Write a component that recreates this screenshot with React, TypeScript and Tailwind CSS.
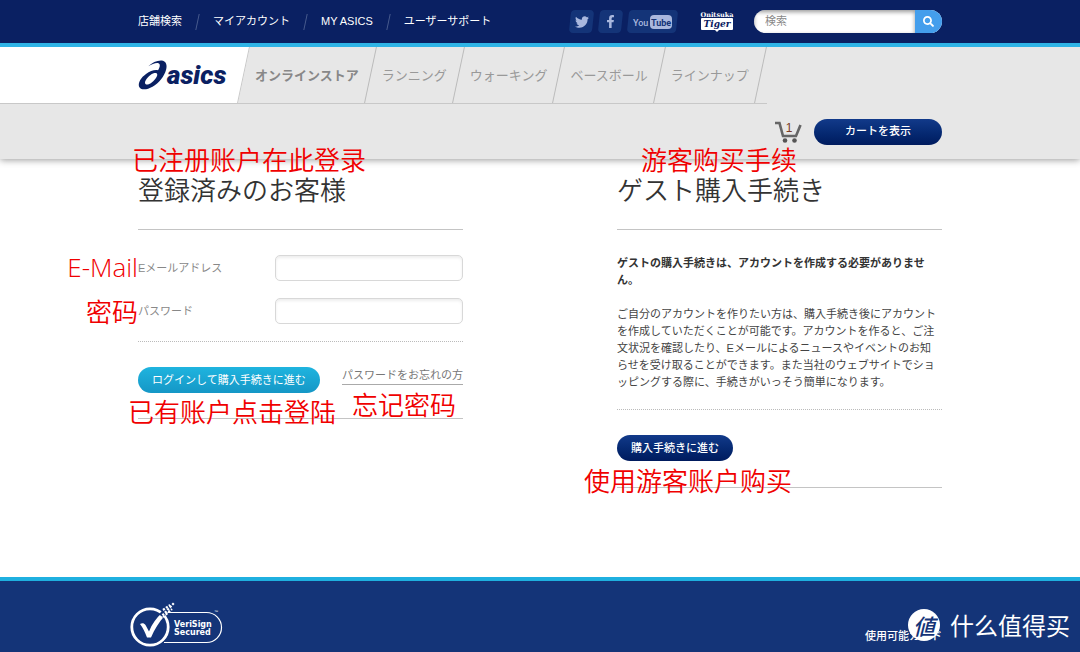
import React from "react";
import { FaFacebookF, FaTwitter, FaSearch } from "react-icons/fa";

const NAV_LINKS = ["店舗検索", "マイアカウント", "MY ASICS", "ユーザーサポート"];

const TABS = [
  { label: "オンラインストア", active: true },
  { label: "ランニング", active: false },
  { label: "ウォーキング", active: false },
  { label: "ベースボール", active: false },
  { label: "ラインナップ", active: false },
];

function AsicsLogo() {
  return (
    <svg width="96" height="32" viewBox="0 0 96 32" role="img" aria-label="asics">
      {/* Spiral mark */}
      <path
        fill="#0a2062"
        fillRule="evenodd"
        d="M10.300 7.200C14 3.500 19 1.200 23.500 1.400C28 1.800 29.600 5.800 28 11C26.500 17 21 24 14.500 27.800C8.500 31.200 2.500 31.300 1 27.500C0 23.500 3 18.500 8 15C12 12 16.500 10.600 20 11.300C22 8.500 22.600 5.200 20.500 4.300C18 3.500 14 5.200 10.300 7.200ZM7.500 25C5.800 23 9 18.500 12.500 16C15.500 13.800 18.800 13.400 19.200 15.200C19.800 17.600 16 22 12.800 24.200C10.500 25.700 8.300 26 7.500 25Z"
      />
      <text x="29" y="25" fill="#0a2062" fontFamily="Roboto, 'Liberation Sans', sans-serif" fontSize="26" fontWeight="900" fontStyle="italic">
        asics
      </text>
    </svg>
  );
}

function TigerLogo() {
  return (
    <svg width="34" height="23" viewBox="0 0 34 23" role="img" aria-label="Onitsuka Tiger">
      <text x="17" y="7" textAnchor="middle" fill="#fff" fontFamily="'DejaVu Serif', serif" fontWeight="700" fontSize="6.500">
        Onitsuka
      </text>
      <path fill="#fff" d="M2 8H32Q33 8 33 9V19Q33 20 32 20H19L17 22L15 20H2Q1 20 1 19V9Q1 8 2 8Z" />
      <text x="17" y="17" textAnchor="middle" fill="#0a2062" fontFamily="'DejaVu Serif', serif" fontStyle="italic" fontWeight="700" fontSize="9">
        Tiger
      </text>
    </svg>
  );
}

function YouTubeLogo() {
  return (
    <svg width="42" height="16" viewBox="0 0 42 16" aria-hidden="true">
      <text x="1" y="12" fill="#a9b8de" fontFamily="Roboto, 'Liberation Sans', sans-serif" fontWeight="500" fontSize="9">
        You
      </text>
      <rect x="18" y="1" width="22" height="14" rx="4" fill="#a9b8de" />
      <text x="29" y="12" textAnchor="middle" fill="#143478" fontFamily="Roboto, 'Liberation Sans', sans-serif" fontWeight="700" fontSize="9">
        Tube
      </text>
    </svg>
  );
}

function CartIcon() {
  return (
    <svg width="28" height="23" viewBox="0 0 28 23" aria-hidden="true">
      <path d="M1 3H5.500L9 16H22L26.500 5" fill="none" stroke="#666" strokeWidth="2.600" />
      <circle cx="11" cy="20.500" r="2.300" fill="#555" />
      <circle cx="20.500" cy="20.500" r="2.300" fill="#555" />
      <text x="15" y="12" textAnchor="middle" fill="#7a3b22" fontFamily="'Liberation Sans', sans-serif" fontSize="12">
        1
      </text>
    </svg>
  );
}

function VeriSignBadge() {
  return (
    <svg width="94" height="46" viewBox="0 0 94 46" role="img" aria-label="VeriSign Secured">
      <path d="M34 11.500H76.500A15 15 0 0 1 76.500 41.500H34" fill="none" stroke="#fff" strokeWidth="1.200" />
      <circle cx="20" cy="26" r="18.200" fill="#143478" stroke="#fff" strokeWidth="2.800" />
      <path d="M10 23C12 22 14 22 15.500 24L19 30.500C22 23 26.500 16.500 32 12L34.500 15C29 21 24.500 28.500 21 36.500H17C15 31 13 27 10 23Z" fill="#fff" />
      <path d="M31 15L37 8" stroke="#143478" strokeWidth="5" />
      <path d="M30 17L44 2M33 16L42 8M33 9L40 4" stroke="#fff" strokeWidth="2.200" strokeDasharray="2.200 1.400" />
      <text x="44" y="26" fill="#fff" fontFamily="'DejaVu Sans', sans-serif" fontWeight="700" fontSize="8">
        VeriSign
      </text>
      <text x="44" y="34" fill="#fff" fontFamily="'DejaVu Sans', sans-serif" fontWeight="700" fontSize="8">
        Secured
      </text>
      <text x="84" y="12" fill="#fff" fontFamily="'Liberation Sans', sans-serif" fontSize="4">
        ™
      </text>
    </svg>
  );
}

function SocialLink({ label, wide, children }: { label: string; wide?: boolean; children: React.ReactNode }) {
  return (
    <a href="#" aria-label={label} className={`relative flex h-[23px] items-center justify-center text-[#a9b8de] ${wide ? "w-[51px]" : "w-[25px]"}`}>
      <span className="absolute inset-x-px inset-y-0 -skew-x-6 rounded-sm bg-[#143478]" />
      <span className="relative">{children}</span>
    </a>
  );
}

function Note({ className, children }: { className: string; children: React.ReactNode }) {
  return (
    <span
      lang="zh-CN"
      className={`pointer-events-none absolute whitespace-nowrap font-['Open_Sans','Noto_Sans_CJK_SC',sans-serif] text-[26px] leading-[26px] font-[350] text-[#f00000] ${className}`}
    >
      {children}
    </span>
  );
}

function Field({ id, label, type }: { id: string; label: string; type: string }) {
  return (
    <div className="flex items-center justify-between">
      <label htmlFor={id} className="text-[#888]">
        {label}
      </label>
      <input id={id} type={type} className="h-[26px] w-[188px] rounded-[5px] border border-[#d8d8d8] bg-white px-2 shadow-[inset_0_2px_3px_#eee] outline-none" />
    </div>
  );
}

export default function App() {
  return (
    <div lang="ja" className="flex min-h-screen flex-col overflow-x-hidden bg-white font-['Liberation_Sans','Noto_Sans_CJK_JP',sans-serif] text-[11px] leading-[17px]">
      <header className="bg-[#e7e7e7] shadow-[0_1px_7px_#999]">
        {/* Top bar */}
        <div className="border-b-4 border-[#2fb4e6] bg-[#0a2062]">
          <div className="mx-auto flex h-[43px] max-w-[804px] items-center justify-between">
            <nav className="flex items-center">
              {NAV_LINKS.map((label, i) => (
                <React.Fragment key={label}>
                  {i > 0 && <span className="mx-[15px] h-4 w-px -skew-x-12 bg-[#47598d]" />}
                  <a href="#" className="whitespace-nowrap text-white">
                    {label}
                  </a>
                </React.Fragment>
              ))}
            </nav>
            <div className="flex items-center">
              <div className="flex gap-1">
                <SocialLink label="Twitter">
                  <FaTwitter size={14} />
                </SocialLink>
                <SocialLink label="Facebook">
                  <FaFacebookF size={13} />
                </SocialLink>
                <SocialLink label="YouTube" wide>
                  <YouTubeLogo />
                </SocialLink>
              </div>
              <a href="#" className="mr-5 ml-[22px]">
                <TigerLogo />
              </a>
              <form className="flex h-[23px] w-[188px] overflow-hidden rounded-full bg-white">
                <input
                  type="search"
                  aria-label="検索"
                  placeholder="検索"
                  className="min-w-0 flex-1 pl-[11px] shadow-[inset_0_2px_4px_#999] outline-none placeholder:text-[#888]"
                />
                <button type="button" aria-label="検索する" className="flex w-[27px] items-center justify-center bg-[#449eec] text-white">
                  <FaSearch size={11} />
                </button>
              </form>
            </div>
          </div>
        </div>

        {/* Logo and tabs */}
        <div className="grid grid-cols-[1fr_minmax(0,804px)_1fr]">
          <div className="border-b border-[#c8c8c8] bg-white" />
          <div className="flex h-[57px]">
            <a href="#" className="relative flex w-[106px] items-center border-b border-[#c8c8c8]">
              <span className="absolute inset-y-0 right-0 -left-4 -skew-x-12 border-r border-[#c8c8c8] bg-white" />
              <span className="relative">
                <AsicsLogo />
              </span>
            </a>
            <nav className="flex border-b border-[#c8c8c8] pr-1.5 text-[13px]">
              {TABS.map((tab) => (
                <React.Fragment key={tab.label}>
                  <a href="#" className={`flex items-center px-[11px] whitespace-nowrap ${tab.active ? "font-bold text-[#888]" : "text-[#999]"}`}>
                    {tab.label}
                  </a>
                  <span className="w-px -skew-x-12 bg-[#bbb]" />
                </React.Fragment>
              ))}
            </nav>
          </div>
        </div>

        {/* Cart bar */}
        <div className="mx-auto flex h-[55px] max-w-[804px] items-center justify-end gap-3">
          <CartIcon />
          <button type="button" className="h-[26px] w-32 rounded-full bg-linear-to-b from-[#123a8a] to-[#001b5e] font-medium text-white">
            カートを表示
          </button>
        </div>
      </header>

      <main className="relative mx-auto grid w-full max-w-[804px] grid-cols-2 gap-x-[154px] pb-[89px]">
        {/* Registered customers */}
        <section>
          <h2 className="border-b border-[#c4c4c4] pt-4 pb-[22px] text-[26px] leading-8 font-[350] text-[#333]">登録済みのお客様</h2>
          <form>
            <div className="flex flex-col gap-[17px] border-b border-dotted border-[#bbb] pt-[25px] pb-[17px]">
              <Field id="email" label="Eメールアドレス" type="email" />
              <Field id="password" label="パスワード" type="password" />
            </div>
            <div className="flex items-start justify-between border-b border-[#c4c4c4] py-[25px]">
              <button type="button" className="h-[26px] rounded-full bg-linear-to-b from-[#1fb4df] to-[#1597c6] px-[14px] text-white">
                ログインして購入手続きに進む
              </button>
              <a href="#" className="border-b border-[#aaa] text-[#777]">
                パスワードをお忘れの方
              </a>
            </div>
          </form>
        </section>

        {/* Guest checkout */}
        <section className="text-[#444]">
          <h2 className="border-b border-[#c4c4c4] pt-4 pb-[22px] text-[26px] leading-8 font-[350] text-[#333]">ゲスト購入手続き</h2>
          <div className="border-b border-dotted border-[#bbb] pt-[25px] pr-1 pb-[18px] [line-break:loose]">
            <p className="mb-[17px] font-bold text-[#333]">ゲストの購入手続きは、アカウントを作成する必要がありません。</p>
            <p>
              ご自分のアカウントを作りたい方は、購入手続き後にアカウントを作成していただくことが可能です。アカウントを作ると、ご注文状況を確認したり、Eメールによるニュースやイベントのお知らせを受け取ることができます。また当社のウェブサイトでショッピングする際に、手続きがいっそう簡単になります。
            </p>
          </div>
          <div className="border-b border-[#c4c4c4] pt-[25px] pb-[26px]">
            <button type="button" className="h-[26px] rounded-full bg-linear-to-b from-[#123a8a] to-[#001b5e] px-[14px] font-medium text-white">
              購入手続きに進む
            </button>
          </div>
        </section>

        {/* Red notes laid over the form */}
        <Note className="-top-3 -left-1.5">已注册账户在此登录</Note>
        <Note className="-top-3 left-[503px]">游客购买手续</Note>
        <Note className="top-[95px] right-full">E-Mail</Note>
        <Note className="top-[140px] right-full">密码</Note>
        <Note className="top-[240px] -left-2.5">已有账户点击登陆</Note>
        <Note className="top-[233px] left-[214px]">忘记密码</Note>
        <Note className="top-[309px] left-[446px]">使用游客账户购买</Note>
      </main>

      <footer className="relative grow border-t-4 border-[#1fb0e0] bg-[#143478]">
        <div className="mx-auto flex max-w-[804px] items-end justify-between pt-5 pb-1">
          <div className="-ml-2">
            <VeriSignBadge />
          </div>
          <p className="pb-0.5 font-medium text-white">使用可能カード</p>
        </div>
        {/* Watermark */}
        <div lang="zh-CN" className="absolute top-7 right-2.5 flex items-center gap-2.5 font-['Noto_Sans_CJK_SC',sans-serif] text-white">
          <span className="flex size-8 items-center justify-center rounded-full bg-white text-[22px] font-medium text-[#143478] italic">値</span>
          <span className="text-[24px] leading-8">什么值得买</span>
        </div>
      </footer>
    </div>
  );
}
